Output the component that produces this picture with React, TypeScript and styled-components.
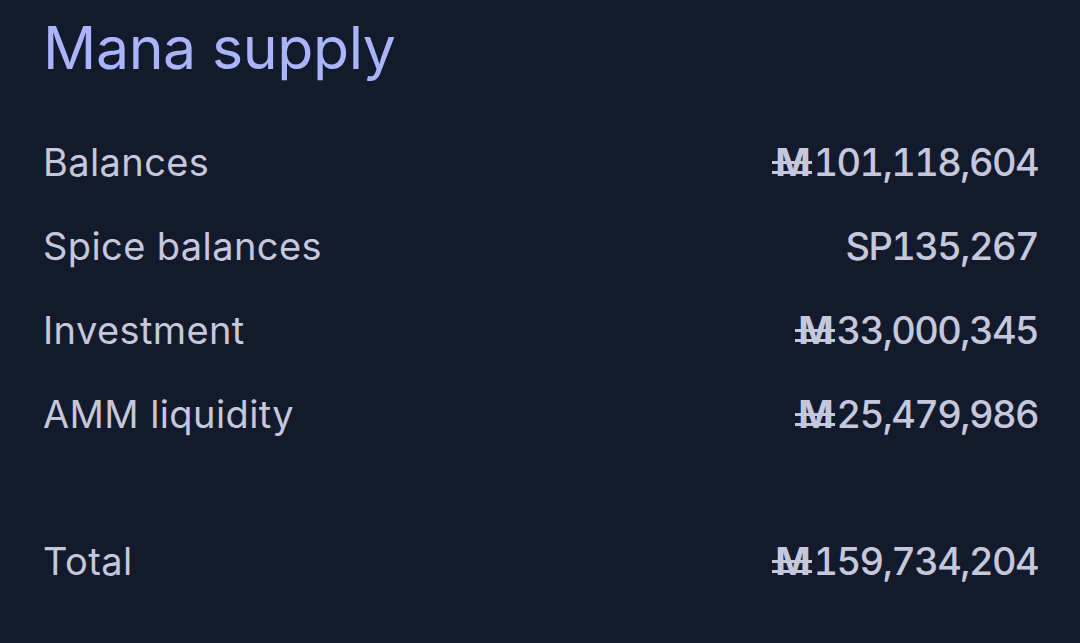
import React from "react";
import styled, { createGlobalStyle } from "styled-components";

const Global = createGlobalStyle`
  html, body { margin: 0; padding: 0; background: #131a2b; }
  body { font-family: "Inter", "Noto Sans", sans-serif; -webkit-font-smoothing: antialiased; }
`;

const Panel = styled.div`
  width: 1080px;
  height: 643px;
  box-sizing: border-box;
  background: #131a2b;
  padding: 14px 42px 0 43px;
  display: flex;
  flex-direction: column;
`;

const Title = styled.h1`
  margin: 0 0 38px;
  font-size: 59px;
  line-height: 68px;
  font-weight: 400;
  color: #a9b4fb;
  letter-spacing: -0.4px;
`;

const Rows = styled.div`
  display: flex;
  flex-direction: column;
`;

const Row = styled.div<{ $gapTop?: number }>`
  display: flex;
  justify-content: space-between;
  align-items: center;
  height: 84px;
  margin-top: ${(p) => p.$gapTop ?? 0}px;
  font-size: 38px;
  color: #c5c8dc;
`;

const Label = styled.span`
  font-weight: 400;
  letter-spacing: 0.4px;
`;

const Value = styled.span`
  font-weight: 500;
  letter-spacing: -1.6px;
  font-variant-numeric: tabular-nums;
`;

const Mana = styled.span`
  position: relative;
  display: inline-block;
  font-weight: 700;
  letter-spacing: 0;
  margin-right: 3px;
  &::before,
  &::after {
    content: "";
    position: absolute;
    left: -3px;
    right: -1px;
    height: 3px;
    background: currentColor;
  }
  &::before { top: 47%; }
  &::after { top: 70%; }
`;

const rows: { label: string; prefix: "mana" | "sp"; value: string }[] = [
  { label: "Balances", prefix: "mana", value: "101,118,604" },
  { label: "Spice balances", prefix: "sp", value: "135,267" },
  { label: "Investment", prefix: "mana", value: "33,000,345" },
  { label: "AMM liquidity", prefix: "mana", value: "25,479,986" },
];

const Amount = ({ prefix, value }: { prefix: "mana" | "sp"; value: string }) => (
  <Value>
    {prefix === "mana" ? <Mana>M</Mana> : "SP"}
    {value}
  </Value>
);

export default function App() {
  return (
    <>
      <Global />
      <Panel>
        <Title>Mana supply</Title>
        <Rows>
          {rows.map((r) => (
            <Row key={r.label}>
              <Label>{r.label}</Label>
              <Amount prefix={r.prefix} value={r.value} />
            </Row>
          ))}
          <Row $gapTop={63}>
            <Label>Total</Label>
            <Amount prefix="mana" value="159,734,204" />
          </Row>
        </Rows>
      </Panel>
    </>
  );
}
